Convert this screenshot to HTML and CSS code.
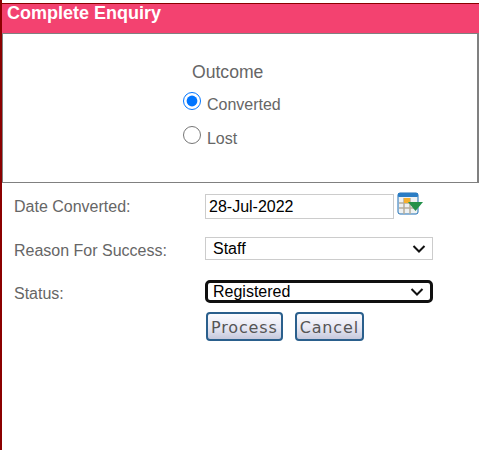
FILE: index.html
```html
<!DOCTYPE html>
<html lang="en">
<head>
    <meta charset="UTF-8">
    <title>Complete Enquiry</title>
    <link rel="stylesheet" href="styles.css">
</head>
<body>
    <div class="panel">
        <div class="panel-title">Complete Enquiry</div>
        <div class="outcome">
            <div class="outcome-title">Outcome</div>
            <label class="outcome-option"><input type="radio" name="outcome" checked> Converted</label>
            <label class="outcome-option"><input type="radio" name="outcome"> Lost</label>
        </div>
    </div>
    <form class="details">
        <label class="field-label">Date Converted:</label>
        <div class="date-cell">
            <input type="text" class="date-input" value="28-Jul-2022">
            <svg class="calendar" width="27" height="24" viewBox="0 0 27 24">
                <rect x="1" y="1" width="20" height="21" rx="2" fill="#eef1f2" stroke="#1f6fb5"/>
                <rect x="1" y="1" width="20" height="4" rx="1" fill="#2a7cc4"/>
                <path d="M2 11h18M2 16h18M7 6v16M13 6v16" stroke="#b5ad9d" stroke-width="1.5"/>
                <rect x="7" y="6" width="6" height="5" fill="#f5b02e"/>
                <path d="M11 10h15l-7.500 9z" fill="#23914a"/>
            </svg>
        </div>
        <label class="field-label">Reason For Success:</label>
        <select class="field-select">
            <option>Staff</option>
        </select>
        <label class="field-label">Status:</label>
        <select class="field-select field-select-focus">
            <option>Registered</option>
        </select>
        <div class="buttons">
            <button type="button" class="btn">Process</button>
            <button type="button" class="btn">Cancel</button>
        </div>
    </form>
</body>
</html>
```

FILE: styles.css
```css
body {
    margin: 0;
    min-height: 450px;
    box-sizing: border-box;
    border-left: 2px solid #8b0000;
    padding-top: 3px;
    font-family: "Liberation Sans", Arial, sans-serif;
    color: #666;
    background-color: #fff;
    overflow: hidden;
}
.panel {
    height: 180px;
    box-sizing: border-box;
    border: 1px solid #808080;
    border-top: none;
    border-right-width: 2px;
}
.panel-title {
    height: 31px;
    margin-left: -1px;
    margin-right: -2px;
    padding-left: 5px;
    box-sizing: border-box;
    background-color: #f34270;
    border-top: 1px solid #8b0000;
    border-bottom: 1px solid #808080;
    color: #fff;
    font-size: 18px;
    font-weight: bold;
    line-height: 18px;
}
.outcome {
    padding: 28px 0 0 180px;
}
.outcome-title {
    margin: 0 0 10px 9px;
    font-size: 17.6px;
    line-height: 20px;
}
.outcome-option {
    display: block;
    height: 34px;
    font-size: 16px;
}
.outcome-option input {
    width: 18px;
    height: 18px;
    margin: 0 1.5px 3px 0;
}
.details {
    display: grid;
    grid-template-columns: 191px 228px;
    grid-template-rows: 44px 43px 31px auto;
    padding: 11px 0 0 12px;
    align-items: start;
}
.field-label {
    font-size: 16px;
    line-height: 25px;
}
.date-cell {
    display: flex;
    align-items: flex-start;
}
.date-input {
    width: 189px;
    height: 25px;
    box-sizing: border-box;
    padding: 0 3px;
    border: 1px solid #ccc;
    font-family: "Liberation Sans", Arial, sans-serif;
    font-size: 16px;
    color: #000;
}
.calendar {
    margin: -2px 0 0 3px;
}
.field-select {
    width: 228px;
    height: 23px;
    margin-top: -1px;
    padding: 0 7px;
    border: 1px solid #ccc;
    border-radius: 0;
    appearance: none;
    background: #fff url("data:image/svg+xml,%3Csvg xmlns='http://www.w3.org/2000/svg' width='14' height='8'%3E%3Cpath d='M1.5 1l5.5 5.500 5.500-5.500' fill='none' stroke='%23111' stroke-width='2'/%3E%3C/svg%3E") no-repeat right 6px center;
    font-family: "Liberation Sans", Arial, sans-serif;
    font-size: 16px;
    color: #000;
}
.field-select-focus {
    border: 3px solid #101010;
    border-radius: 5px;
    padding: 0 5px;
}
.buttons {
    grid-column: 2;
    display: flex;
    gap: 12px;
    padding-left: 1px;
}
.btn {
    height: 29px;
    padding: 1px 3px 0;
    border: 2px solid #2a5f8c;
    border-radius: 4px;
    background: linear-gradient(#fbfbfe, #e6e7f3 55%, #c5c8dc);
    font-family: "DejaVu Sans", Verdana, sans-serif;
    font-size: 16px;
    letter-spacing: 0.85px;
    color: #555;
}
```
